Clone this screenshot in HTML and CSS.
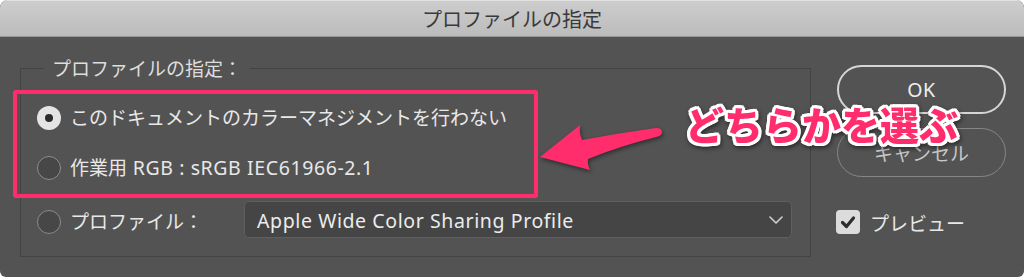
FILE: index.html
```html
<!DOCTYPE html>
<html lang="ja">
<head>
<meta charset="utf-8">
<title>プロファイルの指定</title>
<link rel="stylesheet" href="styles.css">
</head>
<body>
<div class="window">
  <div class="titlebar">プロファイルの指定</div>
  <div class="content">
    <fieldset class="group">
      <legend>プロファイルの指定：</legend>
      <div class="row row1"><span class="radio checked"></span><span class="label">このドキュメントのカラーマネジメントを行わない</span></div>
      <div class="row row2"><span class="radio"></span><span class="label">作業用<span class="latin"> RGB : sRGB IEC61966-2.1</span></span></div>
      <div class="row row3">
        <span class="radio"></span><span class="label label-profile">プロファイル：</span>
        <div class="select"><span class="latin">Apple Wide Color Sharing Profile</span>
          <svg class="chev" width="14" height="8" viewBox="0 0 14 8"><path d="M1 1 L7 7 L13 1" fill="none" stroke="#d0d0d0" stroke-width="1.6" stroke-linecap="round" stroke-linejoin="round"/></svg>
        </div>
      </div>
    </fieldset>
    <div class="side">
      <button class="btn btn-ok"><span class="latin">OK</span></button>
      <button class="btn btn-cancel">キャンセル</button>
      <div class="check"><span class="box"><svg width="24" height="24" viewBox="0 0 24 24"><path d="M6.5 12.5 L10.5 16.5 L17.5 8" fill="none" stroke="#2e2e2e" stroke-width="3.2" stroke-linecap="round" stroke-linejoin="round"/></svg></span><span class="check-label">プレビュー</span></div>
    </div>
  </div>
  <div class="highlight"></div>
  <svg class="arrow" width="1024" height="277" viewBox="0 0 1024 277"><path d="M540 157 L580 125 Q579 133 582 140 Q620 133 656 128 Q662 128 662 132 Q662 136 656 137 Q620 146 588 159 Q587 164 590 170 Z" fill="#ff2d6c"/></svg>
  <div class="callout">どちらかを選ぶ</div>
</div>
</body>
</html>
```
FILE: styles.css
```css
* { box-sizing: border-box; }
body { margin: 0; background: #ffffff; font-family: "Noto Sans", "Noto Sans CJK JP", sans-serif; }
.window { position: relative; width: 1024px; height: 277px; background: #535353; border-radius: 8px 8px 6px 6px; overflow: hidden; }
.titlebar { height: 37px; background: linear-gradient(#cecece, #bcbcbc); border-bottom: 1px solid #979797; box-shadow: inset 0 1px 0 #e2e2e2; display: flex; align-items: center; justify-content: center; font-family: "Noto Sans CJK JP", sans-serif; font-size: 20px; color: #3a3a3a; }
.content { display: flex; align-items: flex-start; padding: 0 18px 0 20px; }
.group { margin: 18px 0 0; width: 791px; min-width: 0; padding: 0 17px 18px 16px; border: 1px solid #434343; color: #e8e8e8; font-size: 19px; }
.group legend { margin-left: 7px; padding: 0 8px; line-height: 26px; font-size: 19px; color: #dedede; font-family: "Noto Sans CJK JP", sans-serif; }
.row { display: flex; align-items: center; height: 36px; }
.row1 { margin-top: 19px; }
.row2 { margin-top: 14px; }
.row3 { margin-top: 15px; height: 37px; }
.row3 .radio, .row3 .label { margin-top: 5px; }
.radio { flex: none; width: 24px; height: 24px; border-radius: 50%; border: 1.5px solid #8c8c8c; background: #474747; margin-right: 9px; display: flex; align-items: center; justify-content: center; }
.radio.checked { border: none; background: #e4e4e4; }
.radio.checked::after { content: ""; width: 8px; height: 8px; border-radius: 50%; background: #2c2c2c; }
.label { white-space: nowrap; line-height: 26px; }
.latin { font-size: 19.5px; letter-spacing: 0.6px; }
.label-profile { width: 174px; flex: none; }
.select { width: 548px; height: 37px; background: #454545; border: 1px solid #5f5f5f; border-radius: 5px; display: flex; align-items: center; justify-content: space-between; padding: 2px 8px 0 12px; color: #ececec; font-size: 19px; }
.chev { margin-top: -2px; }
.side { display: flex; flex-direction: column; margin-left: 26px; width: 169px; margin-top: 28px; }
.btn { height: 49px; border-radius: 25px; background: transparent; font-family: "Noto Sans", "Noto Sans CJK JP", sans-serif; font-size: 19px; padding: 0; }
.btn-ok { border: 2px solid #d6d6d6; color: #efefef; }
.btn-cancel { margin-top: 14px; border: 1.5px solid #878787; color: #c8c8c8; }
.check { display: flex; align-items: center; margin-top: 33px; margin-left: -1px; height: 24px; color: #e8e8e8; font-size: 19px; font-family: "Noto Sans CJK JP", sans-serif; }
.box { width: 24px; height: 24px; border-radius: 4px; background: #dcdcdc; display: flex; }
.check-label { margin-left: 10px; }
.highlight { position: absolute; left: 13px; top: 90px; width: 525px; height: 108px; border: 4px solid #ff2d6c; border-radius: 3px; }
.arrow { position: absolute; left: 0; top: 0; filter: drop-shadow(1px 2px 2px rgba(0,0,0,0.45)); }
.callout { position: absolute; left: 685px; top: 102px; font-family: "Noto Sans CJK JP", sans-serif; font-weight: 900; font-size: 39px; line-height: 1.1; color: #ff2d6c; white-space: nowrap;
  text-shadow: 3px 0 #fff, -3px 0 #fff, 0 3px #fff, 0 -3px #fff, 2px 2px #fff, -2px 2px #fff, 2px -2px #fff, -2px -2px #fff, 3px 1.5px #fff, -3px 1.5px #fff, 3px -1.5px #fff, -3px -1.5px #fff, 1.5px 3px #fff, -1.5px 3px #fff, 1.5px -3px #fff, -1.5px -3px #fff;
  filter: drop-shadow(1px 2px 2px rgba(0,0,0,0.5)); }
```
